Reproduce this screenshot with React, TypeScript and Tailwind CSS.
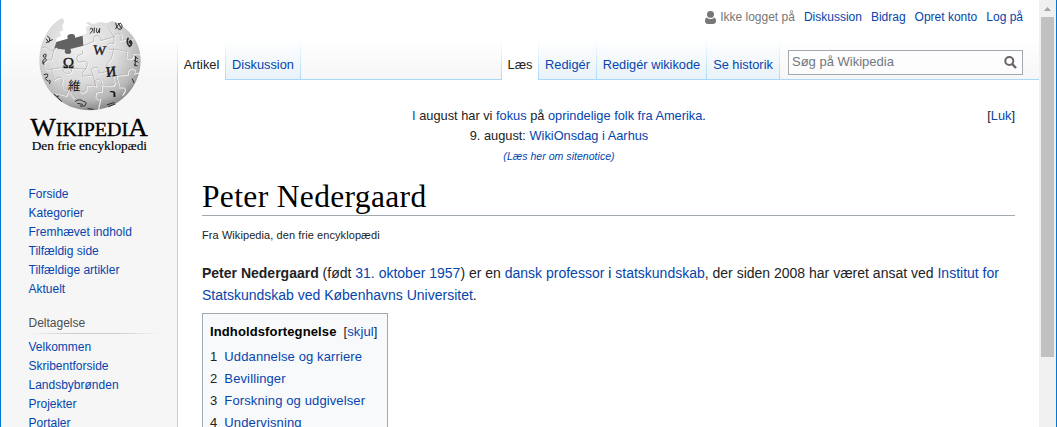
import type { ReactNode } from "react";

function Link({ children }: { children: ReactNode }) {
  return <a className="cursor-pointer text-[#0645ad]">{children}</a>;
}

const seams =
  "M124 145 Q135 137 144 145 Q158 160 169 143 M163 145 L155 180 Q134 178 132 196 Q137 216 154 208 L165 239 Q185 223 188 242 Q179 262 199 269 L222 296 M246 151 Q252 166 240 164 Q226 168 233 184 Q238 190 250 184 Q263 181 262 194 L258 207 Q244 215 248 229 L279 225 Q268 204 286 202 Q302 204 297 220 L330 213 Q314 196 326 187 Q336 180 341 147 Q321 153 321 137 Q326 126 342 131 L342 111 L326 82 M250 137 L282 124 Q276 107 292 107 Q306 110 302 122 L342 111 Q346 98 360 103 Q370 109 362 121 L399 117 M341 147 L381 155 Q374 177 391 177 Q402 173 399 160 L418 163 M154 208 L188 202 Q190 224 206 221 Q219 217 214 205 L258 207 M199 269 L234 260 Q238 280 252 277 Q264 271 259 256 L288 258 Q276 240 296 239 Q309 242 304 254 L329 258 Q352 258 340 241 Q336 230 348 227 L383 223 Q381 206 396 206 Q409 210 403 220 L415 218 M306 256 L304 275 Q284 273 286 289 Q290 301 300 297 L294 328 M164 278 L199 287 L205 270 M348 227 L358 262 Q376 258 374 273 L366 285 M279 225 L288 258";

function Logo() {
  return (
    <svg className="block h-[165px] w-[176px] shrink-0" viewBox="3 0 528 495" role="img">
      <defs>
        <radialGradient id="globe" cx="0.42" cy="0.32" r="0.72">
          <stop offset="0" stopColor="#f0f0f0" />
          <stop offset="0.5" stopColor="#dcdcdc" />
          <stop offset="0.8" stopColor="#b8b8b8" />
          <stop offset="1" stopColor="#7c7c7c" />
        </radialGradient>
      </defs>
      <path
        d="M188 55 L193 65 L187 76 L190 91 L178 96 L184 107 L170 114 L168 127 L203 116 Q199 103 213 102 Q227 101 225 114 L250 104 L260 99 L257 82 L269 76 L257 69 L267 65 L278 72 L302 66 L320 70 L337 63 C390 84 422 128 422 180 C422 265 354 331 270 331 C186 331 118 265 118 181 C118 126 145 82 176 60 Z"
        fill="url(#globe)"
      />
      <path
        d="M169 126 L203 116 Q199 103 213 102 Q227 101 225 113 L248 107 L250 137 L211 147 Q218 160 206 162 Q189 161 196 149 L163 145 Z"
        fill="#626262"
      />
      <path d={seams} fill="none" stroke="#fafafa" strokeWidth="4" transform="translate(1.500 1.500)" />
      <path d={seams} fill="none" stroke="#a0a0a0" strokeWidth="2" />
      <g fill="#171717" textAnchor="middle" fontFamily="'Liberation Serif', 'Noto Sans CJK JP', serif">
        <text x="205" y="204" fontSize="46" stroke="#171717" strokeWidth="1">Ω</text>
        <text x="299" y="164" fontSize="40" stroke="#171717" strokeWidth="1" transform="rotate(4 299 150)">W</text>
        <text x="333" y="229" fontSize="42" stroke="#171717" strokeWidth="1.500" transform="rotate(-6 333 216)">И</text>
        <text x="223" y="271" fontSize="38" transform="rotate(4 223 258)">維</text>
        <text x="339" y="290" fontSize="34" fontWeight="bold" fontFamily="'DejaVu Sans', sans-serif">ר</text>
      </g>
      <g fill="none" stroke="#2c2c2c" strokeWidth="3" strokeLinecap="round">
        <path d="M139 128 L157 119 M143 109 Q154 113 149 122 M139 117 L146 127 M130 166 Q141 155 137 171 Q128 174 130 166 M129 189 Q144 181 136 175 Q123 181 131 193 M132 224 Q149 217 141 232 Q129 233 145 244 Q154 235 149 251 M163 283 L171 290 L176 288 M173 293 L185 304 M270 88 Q278 79 278 91 L271 100 M283 84 L282 98 M290 86 Q287 100 294 98 L299 86 M299 87 L298 98 M347 69 Q351 91 362 88 Q371 79 361 69 Q351 75 347 86 M355 70 L364 85 M405 170 L413 176 M403 182 L414 186 M403 194 L412 198 M407 170 L405 198 M226 304 Q238 294 251 305 Q264 304 254 318 L241 318 M233 310 L247 313 M264 326 L279 328 M322 314 L342 308 M326 320 L346 312 M397 237 L402 248" />
        <path d="M384 115 Q378 130 389 139 Q399 131 392 122 Q386 124 390 129" strokeWidth="5" />
      </g>
      <g fill="#000" stroke="#000" fontFamily="'Liberation Serif', serif">
        <text x="91" y="408" fontSize="77" strokeWidth="1" textLength="352" lengthAdjust="spacingAndGlyphs">
          W<tspan fontSize="57">IKIPEDI</tspan>A
        </text>
        <text x="95" y="449" fontSize="37" strokeWidth="0.400" textLength="346" lengthAdjust="spacingAndGlyphs">
          Den frie encyklopædi
        </text>
      </g>
    </svg>
  );
}

const mainLinks = ["Forside", "Kategorier", "Fremhævet indhold", "Tilfældig side", "Tilfældige artikler", "Aktuelt"];
const communityLinks = ["Velkommen", "Skribentforside", "Landsbybrønden", "Projekter", "Portaler"];

function NavList({ items }: { items: string[] }) {
  return (
    <ul className="text-[12px] leading-[19px]">
      {items.map((item) => (
        <li key={item}><Link>{item}</Link></li>
      ))}
    </ul>
  );
}

function Sidebar() {
  return (
    <aside className="flex h-full w-[176px] shrink-0 flex-col bg-[linear-gradient(#fff_40px,#f6f6f6_80px)]">
      <Logo />
      <nav className="pt-[20px] pr-[17px] pl-[27.5px]">
        <NavList items={mainLinks} />
        <h3 className="mt-[15px] text-[12px] leading-[19px] text-[#4d4d4d]">Deltagelse</h3>
        <div className="mb-[4px] h-px bg-[linear-gradient(90deg,transparent,#c8ccd1_33%,#c8ccd1_66%,transparent)]" />
        <NavList items={communityLinks} />
      </nav>
    </aside>
  );
}

function Divider() {
  return <div className="h-[40px] w-px shrink-0 bg-[linear-gradient(#fff,#a7d7f9)]" />;
}

function Tab({ label, size, active = false }: { label: string; size: string; active?: boolean }) {
  return (
    <div
      className={`${size} flex h-[40px] shrink-0 justify-center pt-[16px] text-[12.8px] leading-[18px] whitespace-nowrap ${
        active ? "bg-white text-[#222]" : "border-b border-[#a7d7f9] bg-[linear-gradient(#fff,#e8f2f8)] text-[#0645ad]"
      }`}
    >
      {label}
    </div>
  );
}

function Header() {
  return (
    <header className="h-[80px] bg-[linear-gradient(#fff_40px,#f6f6f6_80px)]">
      <div className="flex h-[40px] items-start justify-end pt-[8px] pr-[16px] text-[12px] leading-[18px]">
        <svg className="mt-[3px] mr-[4px] h-[13px] w-[11px]" viewBox="0 0 11 13" fill="#777">
          <ellipse cx="5.5" cy="3.4" rx="3.5" ry="3.4" />
          <path d="M1.8 6.5C.5 7.1 0 8 0 10c0 2 1.2 3 3 3h5c1.800 0 3-1 3-3 0-2-.5-2.900-1.800-3.500C7.500 8.500 3.500 8.500 1.800 6.500Z" />
        </svg>
        <span className="mr-[9px] text-[#777]">Ikke logget på</span>
        <div className="flex gap-[9px]">
          <Link>Diskussion</Link>
          <Link>Bidrag</Link>
          <Link>Opret konto</Link>
          <Link>Log på</Link>
        </div>
      </div>
      <div className="flex h-[40px]">
        <Tab label="Artikel" size="w-[47px]" active />
        <Divider />
        <Tab label="Diskussion" size="w-[74px]" />
        <Divider />
        <div className="flex-1 border-b border-[#a7d7f9]" />
        <Divider />
        <Tab label="Læs" size="w-[36px]" active />
        <Divider />
        <Tab label="Redigér" size="w-[57px]" />
        <Divider />
        <Tab label="Redigér wikikode" size="w-[109px]" />
        <Divider />
        <Tab label="Se historik" size="w-[72px]" />
        <Divider />
        <div className="h-[40px] w-[259px] border-b border-[#a7d7f9] pt-[10px] pl-[8px]">
          <div className="flex h-[25px] w-[235px] justify-between border border-[#a2a9b1] bg-white/60 pr-[5px] pl-[3px] text-[13px] leading-[22px] text-[#72777d]">
            <span>Søg på Wikipedia</span>
            <svg className="mt-[5px] h-[13px] w-[13px]" viewBox="0 0 13 13" fill="none" stroke="#666" strokeWidth="2">
              <circle cx="5.300" cy="5" r="4" />
              <path d="M8.200 8 L12 12" strokeWidth="2.500" />
            </svg>
          </div>
        </div>
      </div>
    </header>
  );
}

const sections = ["Uddannelse og karriere", "Bevillinger", "Forskning og udgivelser", "Undervisning"];

function Article() {
  return (
    <main className="px-[24px] pt-[26px] text-[#222]">
      <div className="flex text-[12.8px] leading-[20px]">
        <div className="w-[62px]" />
        <div className="flex-1 text-center">
          <p>
            <Link>I</Link> august har vi <Link>fokus</Link> på <Link>oprindelige folk fra Amerika</Link>.
          </p>
          <p>9. august: <Link>WikiOnsdag i Aarhus</Link></p>
          <p className="text-[10.6px] leading-[21px] italic"><Link>(Læs her om sitenotice)</Link></p>
        </div>
        <div className="w-[161px] text-right">[<Link>Luk</Link>]</div>
      </div>
      <h1 className="mt-[11px] h-[38px] border-b border-[#a2a9b1] pt-px font-['Liberation_Serif',serif] text-[31.5px] leading-[36px] tracking-[0.35px] text-black">
        Peter Nedergaard
      </h1>
      <p className="mt-[10px] text-[11px] leading-[18px] tracking-[0.08px]">Fra Wikipedia, den frie encyklopædi</p>
      <p className="mt-[18px] text-[14px] leading-[22px] whitespace-nowrap">
        <b>Peter Nedergaard</b> (født <Link>31. oktober</Link> <Link>1957</Link>) er en <Link>dansk</Link> <Link>professor</Link> i{" "}
        <Link>statskundskab</Link>, der siden 2008 har været ansat ved <Link>Institut for</Link>
        <br />
        <Link>Statskundskab ved Københavns Universitet</Link>.
      </p>
      <section className="mt-[7px] h-[160px] w-[186px] border border-[#a2a9b1] bg-[#f8f9fa] px-[7px] pt-[7px] text-[13px] leading-[22px] tracking-[0.12px]">
        <h2 className="mb-[3px] whitespace-nowrap text-black">
          <b>Indholdsfortegnelse</b>
          <span className="ml-[7px] text-[#222]">[<Link>skjul</Link>]</span>
        </h2>
        <ol>
          {sections.map((section, index) => (
            <li key={section} className="flex gap-[7px] whitespace-nowrap">
              <span>{index + 1}</span>
              <Link>{section}</Link>
            </li>
          ))}
        </ol>
      </section>
    </main>
  );
}

function Scrollbar() {
  return (
    <div className="flex h-full w-[17px] shrink-0 flex-col items-center bg-[#f0f0f0]">
      <svg className="h-[17px] w-[17px] shrink-0" viewBox="0 0 17 17" fill="#a3a3a3">
        <path d="M5 11 L8.500 7 L12 11Z" />
      </svg>
      <div className="h-[340px] w-[13px] bg-[#c1c1c1]" />
    </div>
  );
}

export default function App() {
  return (
    <div className="flex h-[427px] w-[1057px] overflow-hidden border-r border-l border-[#0078d7] bg-white font-['Liberation_Sans',Arial,sans-serif]">
      <Sidebar />
      <div className="h-full w-px shrink-0 bg-[linear-gradient(#fff_40px,#a7d7f9_80px)]" />
      <div className="w-[861px] shrink-0">
        <Header />
        <Article />
      </div>
      <Scrollbar />
    </div>
  );
}
